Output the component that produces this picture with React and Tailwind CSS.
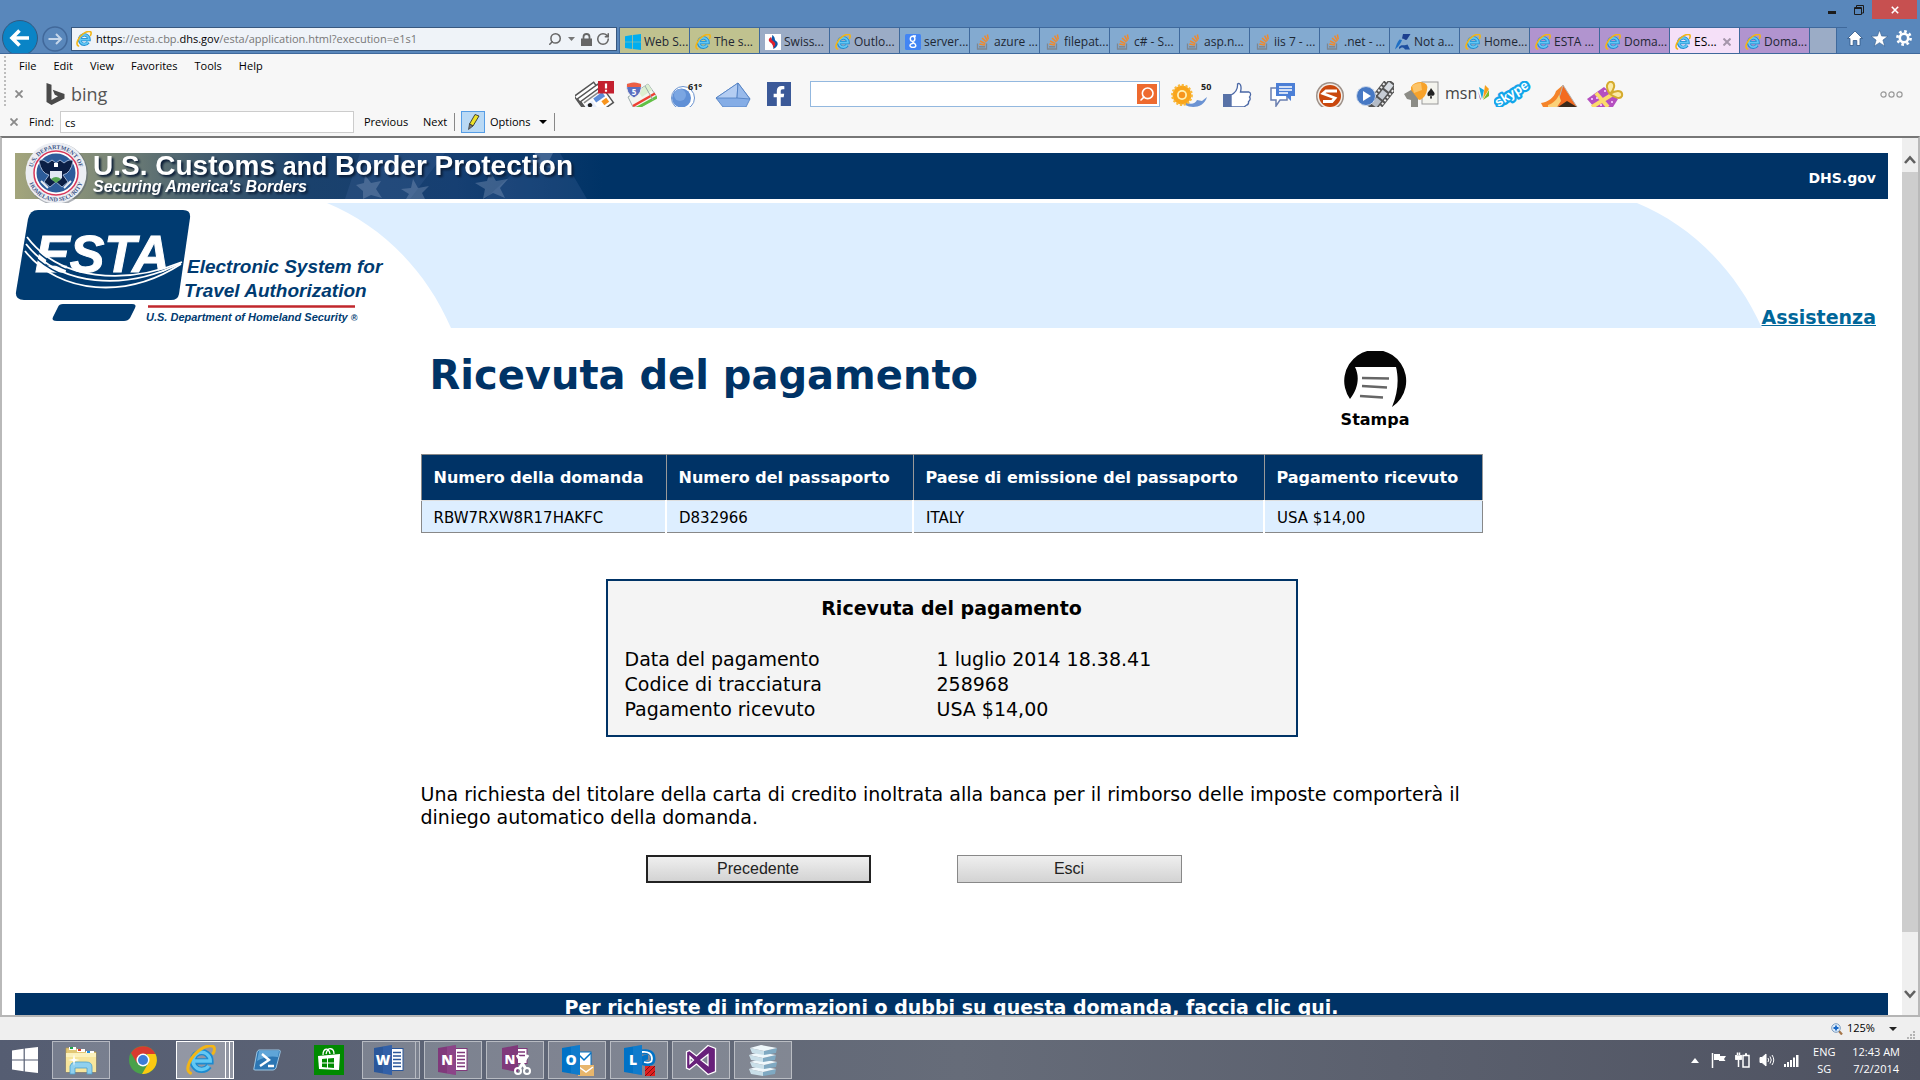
import React from "react";
import { Search, RotateCw } from "lucide-react";
import { FaFacebookF } from "react-icons/fa";

function IeIcon({ className }) {
  return (
    <svg viewBox="0 1 23 23" className={className} aria-hidden="true">
      <path d="M6 13.5 H18.8 A6.8 6.8 0 1 0 17.6 17.2" fill="none" stroke="#1c8bd0" strokeWidth="4.8" />
      <path d="M6 13.3 H18.6 A6.6 6.6 0 1 0 17.4 17" fill="none" stroke="#62c8f4" strokeWidth="2.6" />
      <path d="M3.5 22.6 C-1.5 20 3.5 9.5 11 4.5 C16 1 22 0.5 21.8 4 C21.8 5.4 21.4 6.6 20.8 7.4" fill="none" stroke="#f2b517" strokeWidth="2.3" strokeLinecap="round" />
    </svg>
  );
}

function WinIcon({ className }) {
  return (
    <svg viewBox="0 0 26 26" className={className} fill="currentColor" aria-hidden="true">
      <path d="M0 3.6 L11.6 1.8 V12.4 H0Z M12.8 1.6 L26 0 V12.4 H12.8Z M0 13.6 H11.6 V24.2 L0 22.6Z M12.8 13.6 H26 V26 L12.8 24.4Z" />
    </svg>
  );
}

function SwissIcon() {
  return (
    <svg viewBox="0 0 16 16" className="size-4" aria-hidden="true">
      <rect width="16" height="16" fill="#fff" />
      <path d="M7 1 C11 3 9 6 11 7 C14 9 13 13 8 15 C10 12 6 10 6 7 C5 5 8 4 7 1Z" fill="#0d59a8" />
      <path d="M6 3 C3 5 3 7 6 9 C8 10 8 12 8 14 C11 11 11 9 8 7 C6 6 7 4 6 3Z" fill="#e2202c" />
    </svg>
  );
}

function GoogleIcon() {
  return (
    <svg viewBox="0 0 16 16" className="size-4" aria-hidden="true">
      <rect width="16" height="16" rx="1.5" fill="#4285f4" />
      <g fill="none" stroke="#fff" strokeWidth="1.4">
        <ellipse cx="7.6" cy="4.8" rx="2.3" ry="2.6" />
        <path d="M8 2 H11 M7.5 7.4 C6.8 8.6 10.8 9 10.8 11.4 C10.8 14 5 14 5 11.6 C5 10 6.6 9.4 8.4 9.4" />
      </g>
    </svg>
  );
}

function StackIcon() {
  return (
    <svg viewBox="0 0 16 16" className="size-4" fill="none" aria-hidden="true">
      <path d="M2.5 9.5 V15 H11.5 V9.5" stroke="#7f868e" strokeWidth="1.3" />
      <path d="M4 12.8 H10" stroke="#7f868e" strokeWidth="1.5" />
      <path d="M4.2 10 L10 11 M5 7 L10.4 9.6 M7 4 L11.4 8 M9.6 1.6 L12.4 6.8 M12.4 0.5 L13.3 5.4" stroke="#f08a2c" strokeWidth="1.5" />
    </svg>
  );
}

function NotaIcon() {
  return (
    <svg viewBox="0 0 16 16" className="size-4" aria-hidden="true">
      <path d="M8 0 H15.5 L12 5.5 C10.500 7 9.500 4.500 7 4.500Z" fill="#1d3f8f" />
      <path d="M4.500 5.500 L7 6 C6 9 4 12 0 15.500 C1 11 2.500 8 4.500 5.500Z" fill="#1f6fc4" />
      <path d="M4 13 C7 9.500 9 12.500 12.500 10.500 L15 15.500 H10 C8 12.500 6.500 13.500 4 15Z" fill="#1d4fa0" />
    </svg>
  );
}

const TAB_ICONS = {
  win: <WinIcon className="size-4 text-[#00aef0]" />,
  ie: <IeIcon className="size-4" />,
  swiss: <SwissIcon />,
  google: <GoogleIcon />,
  stack: <StackIcon />,
  nota: <NotaIcon />,
};

const OLIVE = "bg-[#c0c28f]";
const GREY = "bg-[#9bacc6]";
const SKY = "bg-[#83aad0]";
const PURPLE = "bg-[#b194cf]";

const TABS = [
  ["Web S...", "win", OLIVE],
  ["The s...", "ie", OLIVE],
  ["Swiss...", "swiss", GREY],
  ["Outlo...", "ie", GREY],
  ["server...", "google", SKY],
  ["azure ...", "stack", SKY],
  ["filepat...", "stack", SKY],
  ["c# - S...", "stack", SKY],
  ["asp.n...", "stack", SKY],
  ["iis 7 - ...", "stack", SKY],
  [".net - ...", "stack", SKY],
  ["Not a...", "nota", SKY],
  ["Home...", "ie", GREY],
  ["ESTA ...", "ie", PURPLE],
  ["Doma...", "ie", PURPLE],
  ["ES...", "ie", "bg-[#f5e0f8]", true],
  ["Doma...", "ie", PURPLE],
];

function TitleBar() {
  return (
    <header className="shrink-0 bg-[#5987bb]">
      <div className="flex h-[27px] items-start justify-end pr-[3px]">
        <button aria-label="Minimize" className="flex h-5 w-[27px] items-end justify-center pb-1.5">
          <span className="h-[3px] w-2 bg-[#1c1c1c]" />
        </button>
        <button aria-label="Restore" className="flex h-5 w-[27px] items-center justify-center">
          <svg viewBox="0 0 10 10" className="size-2.5" fill="none" stroke="#1c1c1c">
            <path d="M2.5 2 V0.5 H9.5 V8 H8" />
            <path d="M0.5 2.5 H7.5 V9.5 H0.5Z M0.5 3.5 H7.5" />
          </svg>
        </button>
        <button aria-label="Close" className="flex h-[19px] w-[45px] items-center justify-center bg-[#c75050]">
          <svg viewBox="0 0 10 10" className="size-2" stroke="#fff" strokeWidth="2">
            <path d="M1 1 L9 9 M9 1 L1 9" />
          </svg>
        </button>
      </div>
      <div className="flex h-[27px] items-stretch border-b border-[#3f699c]">
        <div className="-mt-[7px] flex w-[71px] shrink-0 items-start gap-1 overflow-hidden pl-0.5">
          <button aria-label="Back" className="size-9 shrink-0">
            <svg viewBox="0 0 36 36" className="size-9">
              <circle cx="18" cy="18" r="17.5" fill="#0a84c6" stroke="#34597f" />
              <path d="M27 18 H10 M17.5 10.5 L10 18 L17.5 25.5" stroke="#fff" strokeWidth="3.6" fill="none" />
            </svg>
          </button>
          <button aria-label="Forward" className="mt-1.5 size-[26px] shrink-0">
            <svg viewBox="0 0 26 26" className="size-[26px]" fill="none">
              <circle cx="13" cy="13" r="12" stroke="#41689a" strokeWidth="1.5" />
              <path d="M6.5 13 H19 M14 8 L19 13 L14 18" stroke="#c5d6ea" strokeWidth="2" />
            </svg>
          </button>
        </div>
        <div className="mb-0.5 flex w-[546px] shrink items-center border border-[#38587f] bg-[#eff3f8] pr-1.5 pl-1">
          <IeIcon className="size-4 shrink-0" />
          <div className="ml-1 flex-1 truncate text-[11px] leading-5 text-[#777]">
            <span className="text-black">https</span>://esta.cbp.<span className="text-black">dhs.gov</span>/esta/application.html?execution=e1s1
          </div>
          <button aria-label="Search"><Search className="size-3.5 -scale-x-100 text-[#666]" strokeWidth={2.6} /></button>
          <button aria-label="Search options" className="mx-1.5">
            <svg viewBox="0 0 7 4" className="h-1 w-[7px]"><path d="M0 0 H7 L3.5 4Z" fill="#777" /></svg>
          </button>
          <button aria-label="Security report">
            <svg viewBox="0 0 11 13" className="h-[13px] w-[11px]">
              <rect y="5.5" width="11" height="7.5" fill="#666" />
              <path d="M2.5 6 V4 A3 3 0 0 1 8.500 4 V6" fill="none" stroke="#666" strokeWidth="1.8" />
            </svg>
          </button>
          <button aria-label="Refresh" className="ml-1"><RotateCw className="size-3.5 text-[#666]" strokeWidth={2.6} /></button>
        </div>
        <nav className="ml-0.5 flex min-w-0 flex-1 border-t border-l border-[#3f699c]">
          {TABS.map(([label, icon, bg, active], i) => (
            <button key={i} className={`flex w-[70px] min-w-0 items-center overflow-hidden border-r border-[#3f699c] pt-0.5 pl-[5px] ${bg}`}>
              <span className="shrink-0">{TAB_ICONS[icon]}</span>
              <span className={`ml-[3px] flex-1 overflow-hidden text-left text-[12px] leading-4 whitespace-nowrap ${active ? "text-black" : "text-[#1e2733]"}`}>{label}</span>
              {active && (
                <svg viewBox="0 0 8 8" className="mr-2 size-2 shrink-0" stroke="#a596ab" strokeWidth="2"><path d="M0.500 0.500 L7.500 7.500 M7.500 0.500 L0.500 7.500" /></svg>
              )}
            </button>
          ))}
          <button aria-label="New tab" className="w-[27px] border-r border-[#3f699c] bg-[#9bacc6]" />
        </nav>
        <div className="flex items-center gap-2 pr-2 pb-1 text-white">
          <button aria-label="Home">
            <svg viewBox="0 0 16 16" className="size-4" fill="#fff" stroke="#2e5687" strokeWidth="0.800"><path d="M8 1 L15.500 8.500 H13 V15.500 H9.800 V10.500 H6.200 V15.500 H3 V8.500 H0.500Z" /></svg>
          </button>
          <button aria-label="Favorites">
            <svg viewBox="0 0 16 16" className="size-[17px]" fill="#fff" stroke="#2e5687" strokeWidth="0.500"><path d="M8 0.300 L10 5.700 L15.800 5.900 L11.200 9.500 L12.900 15.200 L8 11.900 L3.100 15.200 L4.800 9.500 L0.200 5.900 L6 5.700Z" /></svg>
          </button>
          <button aria-label="Tools">
            <svg viewBox="0 0 16 16" className="size-4" fill="none" stroke="#fff">
              <circle cx="8" cy="8" r="6.600" strokeWidth="2.600" strokeDasharray="2.600 2.580" />
              <circle cx="8" cy="8" r="4.200" strokeWidth="2.600" />
            </svg>
          </button>
        </div>
      </div>
    </header>
  );
}

function NewsIcon() {
  return (
    <svg viewBox="0 0 40 26" className="h-[26px] w-10">
      <g transform="rotate(-36 20 20)">
        <rect x="6" y="4" width="24" height="19" fill="#fff" stroke="#555" strokeWidth="1.500" />
        <rect x="7" y="8" width="25" height="19" fill="#fff" stroke="#555" strokeWidth="1.500" />
        <rect x="8" y="12" width="26" height="20" fill="#fdfdfd" stroke="#555" strokeWidth="1.500" />
        <path d="M10 15 H32" stroke="#888" strokeWidth="1.500" />
        <rect x="10" y="18" width="8" height="8" fill="#e7eefc" />
        <circle cx="13.500" cy="20.500" r="2.200" fill="#222" />
        <path d="M10 26 Q13.500 21 17 26Z" fill="#222" />
        <rect x="20" y="17" width="11" height="5" fill="#5b8bd8" />
        <rect x="25" y="24" width="6" height="5" fill="#f7941d" />
      </g>
      <rect x="23" width="16" height="12.500" fill="#c4202f" />
      <path d="M31 2.500 V7.500 M31 8.800 V10.800" stroke="#fff" strokeWidth="2.200" />
    </svg>
  );
}

function MapIcon() {
  return (
    <svg viewBox="0 0 32 26" className="h-[26px] w-8">
      <path d="M3 16 L23 3 L32 16 L16 26 H8Z" fill="#f3f5ef" stroke="#9aa" />
      <path d="M13 10 L23 3 L27 9 L17 16Z" fill="#dcefd0" />
      <path d="M8 25 L30 12.500" stroke="#ee3f33" strokeWidth="2.500" />
      <path d="M12 27 L32 16" stroke="#62c044" strokeWidth="3" />
      <path d="M20 5 L28 19" stroke="#9aa" />
      <path d="M2 3 Q9 0 16 3 Q18 12 9 17 Q0 12 2 3Z" fill="#5a6fc0" stroke="#eee" />
      <path d="M2 3 Q9 0 16 3 V6 H2Z" fill="#ee5f45" />
      <text x="9" y="14" textAnchor="middle" fontSize="8" fontWeight="700" fill="#fff">5</text>
    </svg>
  );
}

function WeatherIcon() {
  return (
    <svg viewBox="0 0 34 26" className="h-[26px] w-[34px]">
      <circle cx="13" cy="17" r="11.500" fill="#fff" stroke="#6b93cf" />
      <circle cx="11.500" cy="17" r="9.500" fill="#6090d6" />
      <circle cx="10" cy="14" r="6" fill="#7ba6e2" />
      <text x="18" y="9" fontSize="9" fontWeight="700" fill="#222">61°</text>
    </svg>
  );
}

function MailIcon() {
  return (
    <svg viewBox="0 0 36 26" className="h-[26px] w-9">
      <path d="M1 17 L23 2 L35 18 L31 26 H8Z" fill="#85ade6" stroke="#4d7cc0" strokeWidth="0.800" />
      <path d="M1 17 L23 2 L22 17Z" fill="#b4cdf2" stroke="#4d7cc0" strokeWidth="0.800" />
      <path d="M23 2 L35 18 L22 17Z" fill="#98baeb" stroke="#4d7cc0" strokeWidth="0.800" />
    </svg>
  );
}

function RewardIcon() {
  return (
    <svg viewBox="0 0 44 26" className="h-[26px] w-11">
      <path d="M12 18 C14 28 34 30 38 16 L33 20 L28 19 C26 24 18 24 12 18Z" fill="#6b93d3" />
      <circle cx="13" cy="14" r="9.500" fill="#f9a51c" />
      <circle cx="13" cy="14" r="9.800" fill="none" stroke="#f9b93c" strokeWidth="2.200" strokeDasharray="2.200 1.600" />
      <circle cx="13" cy="14" r="5" fill="#fff0b0" />
      <circle cx="13" cy="14" r="3.200" fill="#f7941d" />
      <text x="32" y="9" fontSize="9" fontWeight="700" fill="#222">50</text>
    </svg>
  );
}

function LikeIcon() {
  return (
    <svg viewBox="0 0 30 26" className="h-[26px] w-[30px]">
      <path d="M9 14 C13 12 16 8 15.500 3 C18 1 20 5 18.500 11 H27 C29.500 12 28.500 15 27.500 16 C29 18 27.500 20 26.500 20.500 C27 23 25.500 24 24 24.500 L22 26 H9Z" fill="#fff" stroke="#4a67a5" strokeWidth="1.300" />
      <rect x="1" y="13" width="8" height="13" fill="#5872a7" />
    </svg>
  );
}

function ChatIcon() {
  return (
    <svg viewBox="0 0 28 26" className="h-[26px] w-7">
      <path d="M2 7 H18 V19 H11 L7 25 V19 H2Z" fill="#fff" stroke="#6a7fb0" strokeWidth="1.500" />
      <path d="M7 2 H26 V15 H22 V20 L17 15 H7Z" fill="#4c7fd6" />
      <path d="M10 6 H23 M10 9 H23 M10 12 H19" stroke="#fff" strokeWidth="1.300" />
    </svg>
  );
}

function SigmaIcon() {
  return (
    <svg viewBox="0 0 30 26" className="h-[26px] w-[30px]">
      <ellipse cx="16" cy="15" rx="14" ry="14" fill="#9d9088" />
      <ellipse cx="16" cy="15" rx="12.500" ry="12.500" fill="#f3ece6" />
      <ellipse cx="16" cy="15" rx="11" ry="11" fill="#c9470d" />
      <path d="M23 10 H12 L9 12.500 L21 17 L18 20.500 H9" fill="none" stroke="#fff" strokeWidth="2.800" />
    </svg>
  );
}

function VideoIcon() {
  return (
    <svg viewBox="0 0 38 26" className="h-[26px] w-[38px]">
      <g transform="rotate(38 27 14)">
        <rect x="19" y="-2" width="15" height="34" fill="#555" />
        <path d="M21 0 V31 M32 0 V31" stroke="#eee" strokeWidth="2" strokeDasharray="2 2" />
        <rect x="23.500" y="0" width="6" height="8" fill="#d7dce2" />
        <rect x="23.500" y="10" width="6" height="8" fill="#c6ccd4" />
        <rect x="23.500" y="20" width="6" height="8" fill="#b5bcc6" />
      </g>
      <circle cx="10" cy="15" r="9.500" fill="#4779c4" stroke="#ccd8ea" />
      <path d="M7 10 L15 15 L7 20Z" fill="#fff" />
    </svg>
  );
}

function PokerIcon() {
  return (
    <svg viewBox="0 0 38 26" className="h-[26px] w-[38px]">
      <rect x="20" y="1" width="16" height="22" fill="#f4f4ee" stroke="#999" />
      <path d="M29 7 C28 10 25 11 25.500 14 C26 16 28 15 28.500 14 L28 17.500 H30 L29.500 14 C31 16 33 14 32.500 12 C31.500 10 30 9 29 7Z" fill="#222" />
      <path d="M9 6 Q12 1 19 1 Q27 2 25 9 Q24 16 18 19 L9 16Z" fill="#f7a22a" />
      <path d="M10 5 Q13 2 19 2 L20 9 L12 12Z" fill="#fcc469" />
      <path d="M2 13 L9 9 L16 18 V26 H9 L9 19 L5 18Z" fill="#8c8c86" />
    </svg>
  );
}

function MsnIcon() {
  return (
    <svg viewBox="0 0 46 26" className="h-[26px] w-[46px]">
      <text x="1" y="18" fontSize="16" fill="#444" fontFamily="Open Sans">msn</text>
      <path d="M38 18 L35 6 L40 9Z" fill="#12a8e0" /><path d="M39 18 L41 4 L45 8Z" fill="#f7a11b" />
      <path d="M39 19 L45 9 V15Z" fill="#7bb928" /><path d="M37 19 L34 10 L36 18Z" fill="#8d3f98" />
    </svg>
  );
}

function SkypeIcon() {
  return (
    <svg viewBox="0 0 38 26" className="h-[26px] w-[38px]">
      <text x="4" y="26" transform="rotate(-32 4 26)" fontSize="13" fontWeight="700" fill="#fff" stroke="#12a5ea" strokeWidth="4.500" strokeLinejoin="round" paintOrder="stroke" fontFamily="Liberation Sans">skype</text>
    </svg>
  );
}

function FireIcon() {
  return (
    <svg viewBox="0 0 38 26" className="h-[26px] w-[38px]">
      <path d="M1 22 C8 21 14 17 16 10 L23 4 L30 16 L24 26 H3Z" fill="#f5842a" />
      <path d="M23 4 L37 26 H14 L20 14Z" fill="#f36b21" stroke="#b5b5b5" />
      <path d="M8 24 C14 22 17 18 19 14 L21 20 L17 26 H8Z" fill="#fbd27a" />
      <path d="M18 26 L27 20 L37 26Z" fill="#3a2a1c" />
    </svg>
  );
}

function GiftIcon() {
  return (
    <svg viewBox="0 0 38 26" className="h-[26px] w-[38px]">
      <path d="M1 18 L18 6 L32 18 L27 26 H8Z" fill="#b54fc0" />
      <path d="M10 12 L22 26 M6 26 L27 13" stroke="#fbdc6a" strokeWidth="4" />
      <path d="M24 13 C18 5 22 0 26 1 C30 3 28 9 24 13 C32 8 37 10 36 15 C34 19 28 16 24 13Z" fill="#fbeaa6" stroke="#d5ab2e" strokeWidth="2" />
      <path d="M5 18 h2 M14 24 h2 M18 10 h2 M25 21 h2 M10 17 h2" stroke="#f0b6f5" strokeWidth="2" />
    </svg>
  );
}

const LEFT_TOOLS = [["News", NewsIcon], ["Maps", MapIcon], ["Weather", WeatherIcon], ["Mail", MailIcon]];
const RIGHT_TOOLS = [["Rewards", RewardIcon], ["Like", LikeIcon], ["Chat", ChatIcon], ["Search history", SigmaIcon], ["Video", VideoIcon], ["Games", PokerIcon], ["MSN", MsnIcon], ["Skype", SkypeIcon], ["Hot", FireIcon], ["Offers", GiftIcon]];

function GreyX({ label }) {
  return (
    <button aria-label={label} className="flex w-2.5 items-center justify-center">
      <svg viewBox="0 0 8 8" className="size-2" stroke="#8a8a8a" strokeWidth="1.800"><path d="M0.500 0.500 L7.500 7.500 M7.500 0.500 L0.500 7.500" /></svg>
    </button>
  );
}

function Toolbars() {
  return (
    <div className="shrink-0 bg-[#f7f7f7] text-[12px] text-black">
      <div className="flex">
        <div className="my-0.5 ml-1 w-0 border-l-2 border-dotted border-[#bdbdbd]" />
        <div className="min-w-0 flex-1">
          <nav className="flex h-6 items-center gap-[17px] pl-[13px] text-[11px]">
            {["File", "Edit", "View", "Favorites", "Tools", "Help"].map((m) => (
              <button key={m}>{m}</button>
            ))}
          </nav>
          <div className="flex h-[30px] items-center pt-0.5">
            <div className="flex w-[566px] shrink-0 items-center pl-2">
              <GreyX label="Close Bing bar" />
              <svg viewBox="0 0 18 22" className="ml-[22px] h-[22px] w-[19px]" fill="#4a4a4a">
                <path d="M0 0 L5 1.700 V17 L11.500 13.300 L8.300 11.800 L6.200 6.800 L18 11 V15.500 L5 22 L0 19Z" />
              </svg>
              <span className="ml-1.5 text-[18px] leading-6 text-[#555]">bing</span>
            </div>
            {LEFT_TOOLS.map(([n, Icon]) => (
              <button key={n} aria-label={n} className="flex w-[46px] shrink-0 justify-center"><Icon /></button>
            ))}
            <button aria-label="Facebook" className="flex w-[46px] shrink-0 justify-center">
              <span className="flex size-6 items-end justify-end bg-[#3b5998] pr-0.5"><FaFacebookF className="size-5 text-white" /></span>
            </button>
            <div className="mr-2 ml-2 flex h-[26px] w-[350px] items-center border border-[#93b8df] bg-white pr-0.5">
              <input aria-label="Search Bing" className="h-full min-w-0 flex-1 px-1 outline-none" />
              <button aria-label="Search" className="flex size-5 items-center justify-center bg-[#ee6a2f]">
                <Search className="size-4 -scale-x-100 text-white" strokeWidth={2.4} />
              </button>
            </div>
            {RIGHT_TOOLS.map(([n, Icon]) => (
              <button key={n} aria-label={n} className="flex w-[46px] shrink-0 justify-center"><Icon /></button>
            ))}
            <button aria-label="More" className="mr-[17px] ml-auto">
              <svg viewBox="0 0 23 7" className="h-[7px] w-[23px]" fill="none" stroke="#9a9a9a" strokeWidth="1.200">
                <circle cx="3.500" cy="3.500" r="2.600" /><circle cx="11.500" cy="3.500" r="2.600" /><circle cx="19.500" cy="3.500" r="2.600" />
              </svg>
            </button>
          </div>
        </div>
      </div>
      <div className="flex h-7 items-center pl-[9px] text-[11px]">
        <GreyX label="Close find bar" />
        <label htmlFor="find" className="ml-2.5 w-[31px]">Find:</label>
        <input id="find" defaultValue="cs" className="h-[22px] w-[294px] border border-[#ccc] bg-white px-1 outline-none" />
        <button className="ml-2.5 w-[46px] text-left">Previous</button>
        <button className="ml-[13px] w-[25px] text-left">Next</button>
        <span className="mx-1.5 h-[18px] w-px bg-[#888]" />
        <button aria-label="Highlight all matches" className="flex h-[22px] w-6 items-center justify-center border border-[#569de5] bg-[#b9d9f5]">
          <svg viewBox="0 0 14 16" className="h-4 w-3.5">
            <path d="M9 0.500 L13 2 L7 12 L3.500 10Z" fill="#ece12a" stroke="#333" strokeWidth="0.900" />
            <path d="M3.500 10 L7 12 L2.500 15.500Z" fill="#777" stroke="#333" strokeWidth="0.700" />
          </svg>
        </button>
        <button className="ml-[5px] flex items-center gap-2">Options
          <svg viewBox="0 0 8 4" className="h-1 w-2"><path d="M0 0 H8 L4 4Z" /></svg>
        </button>
        <span className="mx-[7px] h-[18px] w-px bg-[#888]" />
      </div>
    </div>
  );
}

function CbpBanner() {
  return (
    <svg viewBox="0 0 588 62" className="-mt-3 h-[62px] w-[588px] shrink-0 self-start" role="img" aria-label="U.S. Customs and Border Protection">
      <defs>
        <linearGradient id="cbp" x1="0" x2="1">
          <stop offset="0" stopColor="#a3a57c" /><stop offset="0.140" stopColor="#7f8a78" /><stop offset="0.300" stopColor="#49616f" />
          <stop offset="0.500" stopColor="#1a416c" /><stop offset="0.750" stopColor="#163f72" /><stop offset="1" stopColor="#003366" />
        </linearGradient>
        <path id="sealTop" d="M17 32 A24 24 0 0 1 65 32" />
        <path id="sealLow" d="M12.500 32 A28.500 28.500 0 0 0 69.500 32" />
      </defs>
      <rect y="12" width="588" height="46" fill="url(#cbp)" />
      <path d="M345 12 H430 L395 58 H330Z M470 58 L520 12 H545 L572 58Z" fill="#3f6499" opacity="0.280" />
      <g fill="#8fa4c4" opacity="0.350">
        <path d="M350 34 L356 42 L366 40 L361 48 L367 57 L356 54 L348 58 V50 L341 44 L349 42Z" />
        <path d="M398 38 L403 47 L414 45 L407 52 L410 58 H391 L394 53 L386 48 L396 47Z" />
        <path d="M475 30 L481 40 L493 38 L485 47 L490 57 L478 52 L468 58 L470 48 L460 42 L472 40Z" />
        <path d="M520 12 H538 L534 20 L542 28 L530 26 L524 34 L521 24 L511 21 L519 18Z" />
      </g>
      <circle cx="42" cy="33" r="31" fill="#5b6470" opacity="0.500" />
      <circle cx="41" cy="32" r="30.500" fill="#eceef3" />
      <circle cx="41" cy="32" r="22" fill="#fff" stroke="#d8385a" strokeWidth="1.500" />
      <circle cx="41" cy="32" r="19.500" fill="#2c5c9a" />
      <path d="M41 22 L45 19 L49 22 Q55 17 58 20 Q56 32 48 34 L53 41 L47 46 L41 41 L35 46 L29 41 L34 34 Q26 32 24 20 Q27 17 33 22 L37 19Z" fill="#0b1f45" stroke="#a9bcda" strokeWidth="0.900" />
      <path d="M35 30 H47 V37 Q41 44 35 37Z" fill="#dfe8f3" />
      <path d="M36 38 Q41 34 46 38 L41 42Z" fill="#53a552" />
      <path d="M39 22 H43 V26 H39Z" fill="#fff" />
      <path d="M26 40 L33 47 M56 40 L49 47" stroke="#e9edf4" strokeWidth="2" />
      <g fontFamily="Liberation Serif" fontWeight="700" fill="#3a5488">
        <text fontSize="6"><textPath href="#sealTop" startOffset="50%" textAnchor="middle">U.S. DEPARTMENT OF</textPath></text>
        <text fontSize="6"><textPath href="#sealLow" startOffset="50%" textAnchor="middle">HOMELAND SECURITY</textPath></text>
      </g>
      <g fontFamily="Liberation Sans" fontWeight="700" fill="#fff" className="drop-shadow-[2px_2px_1px_#0a1c36]">
        <text x="78" y="34" fontSize="28">U.S. Customs <tspan fontSize="25">and</tspan> Border Protection</text>
        <text x="78" y="51" fontSize="16" fontStyle="italic">Securing America's Borders</text>
      </g>
    </svg>
  );
}

function EstaLogo() {
  return (
    <svg viewBox="0 0 370 125" className="relative h-[125px] w-[370px]" role="img" aria-label="ESTA">
      <path d="M28 7 H168 Q176 7 175 15 L164 91 Q163 97 156 97 H9 Q0 97 1 89 L13 16 Q15 7 23 7Z" fill="#003b71" />
      <path d="M48 101 H117 Q122 101 120 105 L115 115 Q113 118 109 118 H42 Q36 118 38 114 L43 104 Q44 101 48 101Z" fill="#003b71" />
      <text x="20" y="69" fontFamily="Liberation Sans" fontWeight="700" fontStyle="italic" fontSize="52" fill="#fff" stroke="#fff" strokeWidth="1">ESTA</text>
      <g fill="none" stroke="#003b71" strokeWidth="1.500">
        <path d="M12 37.500 C45 80 112 84 164 61" />
        <path d="M11 44.500 C45 86 112 91 164 62" />
      </g>
      <g fill="none" stroke="#fff" strokeWidth="1.800">
        <path d="M12 34 C45 78 110 82 167 59" />
        <path d="M11 41 C45 84 110 88 166 60" />
        <path d="M10 48 C45 92 112 96 166 61" />
      </g>
      <path d="M133 103.500 H340" stroke="#c1272d" strokeWidth="2.500" />
      <g fontFamily="Liberation Sans" fontWeight="700" fontStyle="italic" fill="#003b71">
        <text x="172" y="70" fontSize="19">Electronic System for</text>
        <text x="169" y="94" fontSize="19">Travel Authorization</text>
        <text x="131" y="118" fontSize="11">U.S. Department of Homeland Security <tspan fontSize="9">®</tspan></text>
      </g>
    </svg>
  );
}

function PrintIcon() {
  return (
    <svg viewBox="0 0 64 58" className="h-[58px] w-16" aria-hidden="true">
      <path d="M7 48 A31 31 0 1 1 49 56 C55 42 56 28 53 16 H12 C17 26 15 38 7 48Z" fill="#050505" />
      <path d="M19 27 L46 27.500 M19 35 L44 36.500 M17 45 L40 46.500" stroke="#666" strokeWidth="2.600" />
    </svg>
  );
}

const COLS = [
  ["Numero della domanda", "RBW7RXW8R17HAKFC", "w-[245px]"],
  ["Numero del passaporto", "D832966", "w-[247px]"],
  ["Paese di emissione del passaporto", "ITALY", "w-[351px]"],
  ["Pagamento ricevuto", "USA $14,00", ""],
];

const RECEIPT = [
  ["Data del pagamento", "1 luglio 2014 18.38.41"],
  ["Codice di tracciatura", "258968"],
  ["Pagamento ricevuto", "USA $14,00"],
];

function PageContent() {
  return (
    <div className="min-w-0 flex-1 overflow-hidden bg-white pr-3.5 pl-[13px] font-['Verdana','DejaVu_Sans',sans-serif] text-black">
      <div className="mt-[15px] mb-1 flex h-[46px] items-center justify-between bg-[#003366]">
        <CbpBanner />
        <a href="#dhs" className="pr-3 pt-1 text-[14px] font-bold text-white">DHS.gov</a>
      </div>
      <div className="relative flex h-[125px] items-end justify-between">
        <svg viewBox="0 0 1873 125" preserveAspectRatio="none" className="absolute inset-0 size-full" aria-hidden="true">
          <path d="M312 0 H1622 C1675 22 1720 65 1747 125 H436 C410 65 365 22 312 0Z" fill="#ddeeff" />
        </svg>
        <EstaLogo />
        <a href="#help" className="relative pr-3 text-[19px] leading-[22px] font-bold text-[#006699] underline">Assistenza</a>
      </div>
      <main className="mx-auto w-[1062px] max-w-full">
        <div className="flex items-start justify-between pt-[22px] pr-[73px] pl-[9px]">
          <h1 className="text-[40px] leading-[50px] font-bold text-[#003366]">Ricevuta del pagamento</h1>
          <button className="flex flex-col items-center pt-px">
            <PrintIcon />
            <span className="text-[16px] leading-[22px] font-bold">Stampa</span>
          </button>
        </div>
        <table className="mt-[23px] w-full table-fixed border-collapse border border-[#888]">
          <thead>
            <tr className="h-[46px] bg-[#003366] text-left text-[16px] text-white">
              {COLS.map(([h, , w]) => (
                <th key={h} scope="col" className={`border-r border-b border-[#999] border-b-[#ddd] pl-3 whitespace-nowrap ${w}`}>{h}</th>
              ))}
            </tr>
          </thead>
          <tbody>
            <tr className="h-8 bg-[#ddeeff] text-[15px]">
              {COLS.map(([h, v], i) => (
                <td key={h} className={i < 3 ? "border-r-2 border-r-white pt-1 pl-3" : "pt-1 pl-3"}>{v}</td>
              ))}
            </tr>
          </tbody>
        </table>
        <section className="mx-auto mt-[46px] w-[692px] border-2 border-[#003366] bg-[#f4f4f4] px-[17px] pt-[15px] pb-[13px] text-[19px] leading-[25px]">
          <h2 className="mb-[26px] text-center font-bold">Ricevuta del pagamento</h2>
          <dl className="grid grid-cols-[312px_1fr]">
            {RECEIPT.map(([k, v]) => (
              <React.Fragment key={k}><dt>{k}</dt><dd>{v}</dd></React.Fragment>
            ))}
          </dl>
        </section>
        <p className="mt-[46px] text-[19px] leading-[23px]">Una richiesta del titolare della carta di credito inoltrata alla banca per il rimborso delle imposte comporterà il diniego automatico della domanda.</p>
        <div className="mt-[26px] flex justify-center gap-[86px] pr-[76px] font-['Liberation_Sans',sans-serif] text-[16px] text-[#222]">
          <button className="h-7 w-[225px] border-2 border-[#222] bg-linear-to-b from-[#efefef] to-[#d3d3d3]">Precedente</button>
          <button className="h-7 w-[225px] border border-[#888] bg-linear-to-b from-[#efefef] to-[#d3d3d3]">Esci</button>
        </div>
      </main>
      <footer className="mt-[110px] bg-[#003366] text-center text-[19px] leading-7 font-bold text-white">
        <a href="#info">Per richieste di informazioni o dubbi su questa domanda, faccia clic qui.</a>
      </footer>
    </div>
  );
}

function Scrollbar() {
  return (
    <div className="flex w-4 shrink-0 flex-col bg-[#efefef]">
      <button aria-label="Scroll up" className="flex h-[34px] items-end justify-center pb-2">
        <svg viewBox="0 0 12 9" className="h-[9px] w-3"><path d="M1 8 L6 2.500 L11 8" fill="none" stroke="#606060" strokeWidth="2.600" /></svg>
      </button>
      <div className="flex-1 bg-[#cdcdcd]" />
      <button aria-label="Scroll down" className="flex h-[83px] items-end justify-center pb-4">
        <svg viewBox="0 0 12 9" className="h-[9px] w-3"><path d="M1 1 L6 6.500 L11 1" fill="none" stroke="#606060" strokeWidth="2.600" /></svg>
      </button>
    </div>
  );
}

function OfficeIcon({ letter, color, dark, children }) {
  return (
    <svg viewBox="0 0 34 32" className="h-8 w-[34px]">
      {children}
      <path d="M2 4 L20 1 V31 L2 28Z" fill={color} />
      <path d="M11 2.500 L20 1 V31 L11 29.500Z" fill={dark} opacity="0.350" />
      <text x="11" y="21" textAnchor="middle" fontFamily="Open Sans" fontSize="14" fontWeight="800" fill="#fff">{letter}</text>
    </svg>
  );
}

function PageLines({ color }) {
  return (
    <>
      <rect x="18" y="4.500" width="13" height="22" fill="#fff" stroke={color} />
      <path d="M21 8.500 H29 M21 12 H29 M21 15.500 H29 M21 19 H29 M21 22.500 H29" stroke={color} strokeWidth="1.500" />
    </>
  );
}

const ExplorerIcon = () => (
  <svg viewBox="0 0 34 32" className="h-8 w-[34px]">
    <path d="M2 4 H12 L14 6 H20 L22 8 H32 V28 H2Z" fill="#e3c876" stroke="#b89b4c" strokeWidth="0.600" />
    <path d="M5 3 h7 v3 h-7Z M13 5 h8 v3 h-8Z M22 7 h8 v3 h-8Z" fill="#fff" />
    <path d="M6 3 h3 v2 h-3Z" fill="#1ba54a" /><path d="M14 5 h3 v2 h-3Z" fill="#d8412d" /><path d="M23 7 h3 v2 h-3Z" fill="#1c8ee0" />
    <path d="M2 9 H32 V28 H2Z" fill="#f7e59c" /><path d="M2 9 H32 V13 H2Z" fill="#fbf1bd" />
    <path d="M6 30 V22 Q7 18 12 18 H22 Q28 18 28 23 V30 H23 V24 H11 V30Z" fill="#8fd0ef" stroke="#4ba0cc" strokeWidth="0.800" />
    <path d="M10 10 L11 15 L16 16 L11 17 L10 22 L9 17 L4 16 L9 15Z" fill="#fff" />
  </svg>
);

const ChromeIcon = () => (
  <svg viewBox="0 0 28 28" className="size-7">
    <circle cx="14" cy="14" r="14" fill="#4aa14b" />
    <path d="M2 7 A14 14 0 0 1 26.500 8 H14 L8 17Z" fill="#d93a2f" />
    <path d="M26.500 8 A14 14 0 0 1 13 28 L20 16 L18 8Z" fill="#fbc912" />
    <circle cx="14" cy="14" r="6.500" fill="#fff" /><circle cx="14" cy="14" r="5" fill="#3d7dd8" />
  </svg>
);

const PowerShellIcon = () => (
  <svg viewBox="0 0 28 24" className="h-6 w-7">
    <path d="M6 2 H26 Q28 2 27 5 L23 20 Q22 22 20 22 H2 Q0 22 1 20 L4 4 Q5 2 6 2Z" fill="#2c76b3" stroke="#9cc5e2" />
    <path d="M6 3 H26 L25 9 Q14 7 4 13Z" fill="#5fa5d8" />
    <path d="M9 6 L16 12 L7 18 M15 18 H21" fill="none" stroke="#fff" strokeWidth="2.400" />
  </svg>
);

const StoreIcon = () => (
  <svg viewBox="0 0 30 30" className="size-[30px]">
    <rect width="30" height="30" fill="#008a00" />
    <path d="M4 11 L26 9 L25 25 L5 24Z" fill="#fff" />
    <path d="M9 10 C9 3 15 2 16 9 M12 9 C14 1 20 3 20 9" fill="none" stroke="#fff" strokeWidth="1.300" />
    <path d="M8 14 L13 13.500 V17.500 H8Z M14 13.400 L20 13 V17.500 H14Z M8 18.500 H13 V22.500 L8 22Z M14 18.500 H20 V23 L14 22.500Z" fill="#008a00" />
  </svg>
);

const WordIcon = () => <OfficeIcon letter="W" color="#2b579a" dark="#3f74c4"><PageLines color="#2b579a" /></OfficeIcon>;
const OneNoteIcon = () => <OfficeIcon letter="N" color="#80397b" dark="#a45aa0"><PageLines color="#80397b" /></OfficeIcon>;
const ClipperIcon = () => (
  <svg viewBox="0 0 34 32" className="h-8 w-[34px]">
    <rect x="18" y="4.500" width="11" height="15" fill="#fff" stroke="#80397b" />
    <path d="M20 8 H27 M20 11.500 H27" stroke="#80397b" strokeWidth="1.500" />
    <path d="M4 4 L20 1 V28 L4 25Z" fill="#80397b" />
    <text x="12" y="20" textAnchor="middle" fontFamily="Open Sans" fontSize="13" fontWeight="800" fill="#fff">N</text>
    <g fill="none" stroke="#fff" strokeWidth="3"><path d="M19 11 L28 25 M30 11 L21 25" /><circle cx="20" cy="27" r="3" strokeWidth="2" /><circle cx="29" cy="27" r="3" strokeWidth="2" /></g>
  </svg>
);
const OutlookIcon = () => (
  <OfficeIcon letter="O" color="#0072c6" dark="#2a8dd8">
    <rect x="18" y="8" width="13" height="14" fill="#fff" stroke="#0072c6" />
    <path d="M18 10 L24 16 L31 9" fill="none" stroke="#0072c6" strokeWidth="1.500" />
    <rect x="18" y="21" width="16" height="11" fill="#e8b66c" />
    <path d="M19 23 L26 28 L33 23" fill="none" stroke="#fff" strokeWidth="1.500" />
  </OfficeIcon>
);
const LyncIcon = () => (
  <OfficeIcon letter="L" color="#0072c6" dark="#2a8dd8">
    <path d="M20 8 Q31 6 31 15 Q31 21 22 19 Q19 13 26 13" fill="none" stroke="#0072c6" strokeWidth="5" />
    <path d="M20 8 Q30 7 30 15 Q30 20 22 18" fill="none" stroke="#fff" strokeWidth="1.800" />
    <rect x="23" y="22" width="10" height="10" fill="#e02020" />
    <path d="M23 27 L28 22 M23 32 L33 22 M28 32 L33 27" stroke="#7c1010" />
  </OfficeIcon>
);
const VsIcon = () => (
  <svg viewBox="0 0 32 32" className="size-8">
    <path d="M23 1.500 L30.500 4.500 V27.500 L23 30.500 L11.500 20 L4.500 25.500 L1.500 24 V8 L4.500 6.500 L11.500 12Z M23 10.500 L16 16 L23 21.500Z M5 12.500 V19.500 L8.500 16Z" fill="#68217a" fillRule="evenodd" stroke="#fff" strokeWidth="1.300" />
  </svg>
);
const ServerIcon = () => (
  <svg viewBox="0 0 30 32" className="h-8 w-[30px]">
    {[22, 15, 8, 1].map((y, i) => (
      <g key={y} transform={`translate(${i % 2 ? 1 : 0} ${y})`}>
        <path d="M1 3 L15 6 V10 L3 8Z" fill="#c9dfe9" /><path d="M15 6 L28 3 L27 8 L15 10Z" fill="#7fa9c2" />
        <path d="M1 3 L12 0 L28 3 L15 6Z" fill="#eff8fc" />
      </g>
    ))}
  </svg>
);

function TaskItem({ label, Icon, kind, n = 0 }) {
  const box =
    kind === "plain" ? "border-transparent" : kind === "active" ? "border-white bg-white/35" : "border-white/45 bg-white/20";
  return (
    <button aria-label={label} className="flex h-[38px] w-[58px] shrink-0 items-stretch">
      <span className={`flex flex-1 items-center justify-center border ${box}`}>{Icon}</span>
      {Array.from({ length: n }, (_, i) => (
        <span key={i} className={`w-1 border border-l-0 ${box}`} />
      ))}
    </button>
  );
}

function Taskbar() {
  return (
    <footer className="flex h-10 shrink-0 items-center bg-linear-to-r from-[#555d72] via-[#666c79] to-[#4e5261] text-white">
      <button aria-label="Start" className="flex w-[52px] shrink-0 justify-center pr-0.5"><WinIcon className="size-[26px] text-white" /></button>
      <div className="flex gap-1">
        <TaskItem label="File Explorer" Icon={<ExplorerIcon />} />
        <TaskItem label="Chrome" Icon={<ChromeIcon />} kind="plain" />
        <TaskItem label="Internet Explorer" Icon={<IeIcon className="size-[30px]" />} kind="active" n={2} />
        <TaskItem label="PowerShell" Icon={<PowerShellIcon />} kind="plain" />
        <TaskItem label="Store" Icon={<StoreIcon />} kind="plain" />
        <TaskItem label="Word" Icon={<WordIcon />} n={1} />
        <TaskItem label="OneNote" Icon={<OneNoteIcon />} />
        <TaskItem label="OneNote clipper" Icon={<ClipperIcon />} />
        <TaskItem label="Outlook" Icon={<OutlookIcon />} />
        <TaskItem label="Lync" Icon={<LyncIcon />} />
        <TaskItem label="Visual Studio" Icon={<VsIcon />} />
        <TaskItem label="Servers" Icon={<ServerIcon />} />
      </div>
      <div className="ml-auto flex items-center pr-5">
        <button aria-label="Show hidden icons" className="mr-3">
          <svg viewBox="0 0 8 5" className="h-[5px] w-2"><path d="M0 5 L4 0 L8 5Z" fill="#fff" /></svg>
        </button>
        <div className="flex items-center gap-2">
          <svg viewBox="0 0 16 16" className="size-4"><path d="M1.500 1 V16" stroke="#fff" strokeWidth="1.500" /><path d="M3 2 H9 V4 H15 L13 7 L14.500 9 H8 V8 H3Z" fill="#fff" /></svg>
          <svg viewBox="0 0 16 16" className="size-4" fill="none" stroke="#fff" strokeWidth="1.500"><path d="M8 3.500 H14 V15 H8Z M10 2 H12 M3.500 8 V15 M1 3 V7 H6 V3 M2.500 0.500 V3 M4.500 0.500 V3" /><path d="M1 4 H6 V7 H1Z" fill="#fff" /></svg>
          <svg viewBox="0 0 16 16" className="size-4" fill="none" stroke="#fff"><path d="M1 5.500 H3 L7 2 V14 L3 10.500 H1Z" fill="#fff" /><path d="M9 6 Q10.500 8 9 10 M11 4.500 Q13.500 8 11 11.500 M13 3 Q16.500 8 13 13" /></svg>
          <svg viewBox="0 0 17 14" className="h-3.5 w-[17px]" fill="#fff"><path d="M1 11 h2 v3 h-2Z M4 9 h2 v5 h-2Z M7 7 h2 v7 h-2Z M10 4.500 h2 v9.500 h-2Z M13 2 h2.500 v12 h-2.500Z" /></svg>
        </div>
        <div className="ml-3 w-6 text-center text-[11px] leading-[17px]"><div>ENG</div><div>SG</div></div>
        <div className="ml-4 text-center text-[11px] leading-[17px] whitespace-nowrap"><div>12:43 AM</div><div>7/2/2014</div></div>
      </div>
    </footer>
  );
}

export default function App() {
  return (
    <div className="flex h-screen flex-col overflow-hidden font-['Open_Sans',sans-serif]">
      <TitleBar />
      <Toolbars />
      <div className="flex min-h-0 flex-1 border-x-2 border-t-2 border-[#b9b9b9] border-t-[#777]">
        <PageContent />
        <Scrollbar />
      </div>
      <div className="flex h-[25px] shrink-0 items-center justify-end border-t-2 border-[#b5b5b5] bg-[#efefef] pr-1 text-[11px]">
        <svg viewBox="0 0 12 12" className="mr-1 size-3"><path d="M7.500 7.500 L11 11.500" stroke="#a5764a" strokeWidth="2.200" /><circle cx="5" cy="5" r="4.300" fill="#dcecfa" stroke="#7c9cc0" /><path d="M5 2.500 V7.500 M2.500 5 H7.500" stroke="#1767c6" strokeWidth="1.800" /></svg>
        <label htmlFor="zoom" className="sr-only">Zoom</label>
        <select id="zoom" className="mr-3.5 appearance-none bg-transparent"><option>125%</option></select>
        <svg viewBox="0 0 8 4" className="mr-2.5 h-1 w-2"><path d="M0 0 H8 L4 4Z" fill="#222" /></svg>
        <svg viewBox="0 0 9 9" className="size-[9px] self-end" fill="#b5b5b5"><path d="M6 0h2v2h-2Z M6 3h2v2h-2Z M3 3h2v2h-2Z M6 6h2v2h-2Z M3 6h2v2h-2Z M0 6h2v2h-2Z" /></svg>
      </div>
      <Taskbar />
    </div>
  );
}
